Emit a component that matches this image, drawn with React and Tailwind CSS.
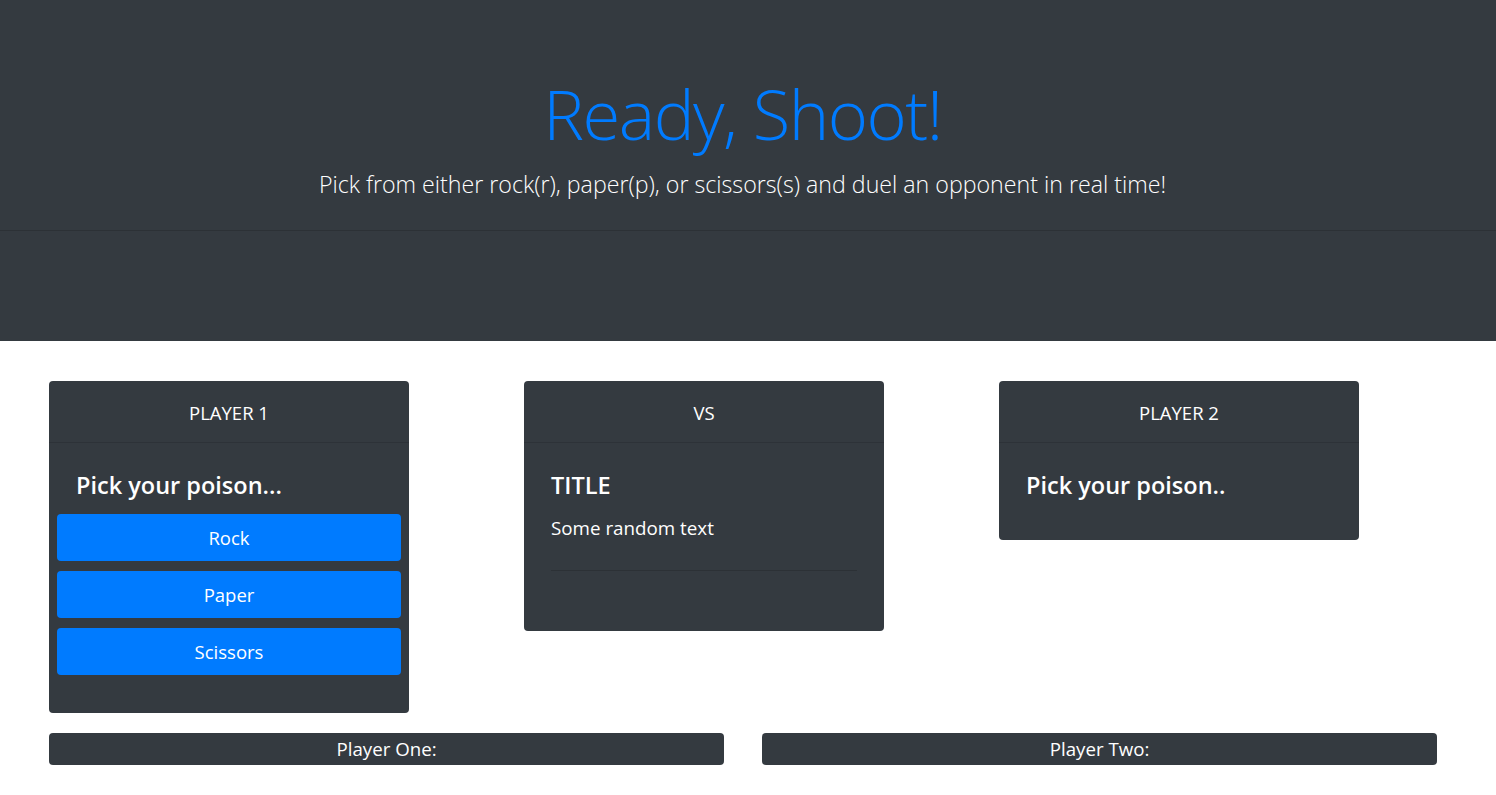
import { useState } from 'react';

const FONT = { fontFamily: '"Open Sans", "Noto Sans", sans-serif' };

function Card({ title, children, className = '' }) {
  return (
    <div className={`w-[360px] bg-[#343a40] rounded text-white ${className}`}>
      <div className="h-[62px] pt-[3px] flex items-center justify-center border-b border-black/[0.125] text-[18.5px]">
        {title}
      </div>
      {children}
    </div>
  );
}

export default function App() {
  const [pick, setPick] = useState(null);

  return (
    <div className="min-h-screen bg-white" style={FONT}>
      {/* Jumbotron */}
      <div className="h-[341px] bg-[#343a40] pt-[72px]">
        <div className="text-center pr-[11px]">
          <h1 className="text-[68.7px] leading-[84px] font-light text-[#007bff] tracking-[-1.5px]">
            Ready, Shoot!
          </h1>
          <p className="mt-[11px] text-[23.2px] leading-[34px] font-light text-white">
            Pick from either rock(r), paper(p), or scissors(s) and duel an opponent in real time!
          </p>
        </div>
        <hr className="mt-[29px] border-t border-black/[0.15]" />
      </div>

      {/* Cards */}
      <div className="flex items-start gap-[115px] px-[49px] mt-[40px]">
        <Card title="PLAYER 1" className="h-[332px]">
          <h4 className="px-[27px] pt-[26px] text-[23.5px] leading-[32px] font-semibold">
            Pick your poison...
          </h4>
          <div className="mt-[13px] px-[8px] flex flex-col gap-[10px]">
            {['Rock', 'Paper', 'Scissors'].map((item) => (
              <button
                key={item}
                onClick={() => setPick(item)}
                className={`h-[47px] w-full rounded bg-[#007bff] text-white text-[18.5px] ${
                  pick === item ? 'bg-[#0069d9]' : ''
                }`}
              >
                {item}
              </button>
            ))}
          </div>
        </Card>

        <Card title="VS" className="h-[250px]">
          <div className="px-[27px] pt-[26px]">
            <h4 className="text-[23.5px] leading-[32px] font-semibold">TITLE</h4>
            <p className="mt-[14px] text-[18.8px] leading-[26px]">Some random text</p>
            <hr className="mt-[29px] border-t border-black/[0.15]" />
          </div>
        </Card>

        <Card title="PLAYER 2" className="h-[159px]">
          <h4 className="px-[27px] pt-[26px] text-[23.5px] leading-[32px] font-semibold">
            Pick your poison..
          </h4>
        </Card>
      </div>

      {/* Scoreboards */}
      <div className="flex gap-[38px] px-[49px] mt-[20px]">
        <div className="w-[675px] h-[32px] pt-[1px] rounded bg-[#343a40] text-white flex items-center justify-center text-[18.7px]">
          Player One:
        </div>
        <div className="w-[675px] h-[32px] pt-[1px] rounded bg-[#343a40] text-white flex items-center justify-center text-[18.7px]">
          Player Two:
        </div>
      </div>
    </div>
  );
}
